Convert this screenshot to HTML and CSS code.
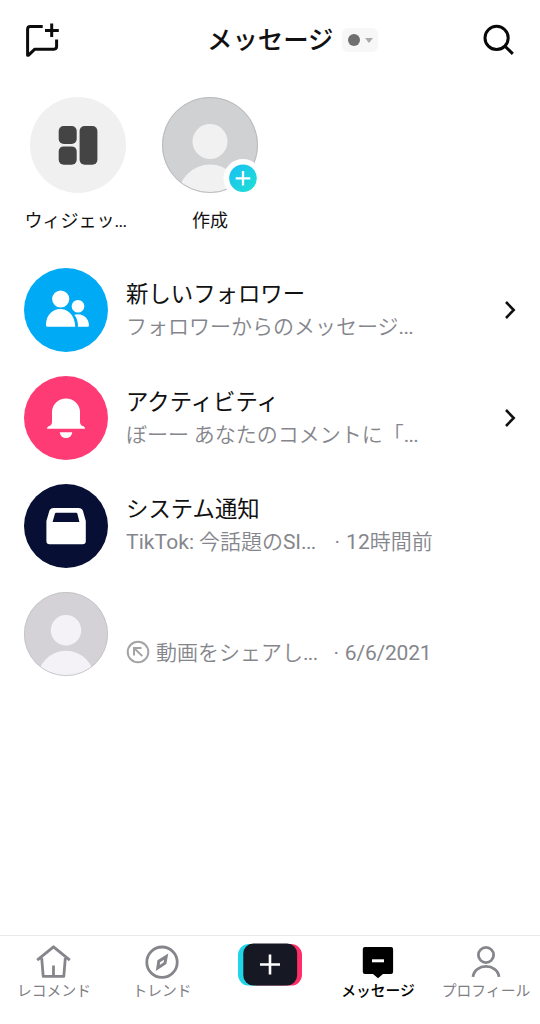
FILE: index.html
```html
<!DOCTYPE html>
<html lang="ja">
<head>
<meta charset="utf-8">
<title>メッセージ</title>
<link rel="stylesheet" href="styles.css">
</head>
<body>
<div class="app">
  <header class="header">
    <svg class="new-chat" width="36" height="36" viewBox="0 0 36 36"><path d="M19.7 4.4H7.3Q4.6 4.4 4.6 7.2V33.2H5.6L11.8 27.2H31Q33.6 27.2 33.6 24.6V17.6M22 8.4H35.8M28.7 1.6V15" fill="none" stroke="#0c0c0c" stroke-width="3" stroke-linejoin="round"/></svg>
    <div class="heading"><h1>メッセージ</h1><span class="status"><i class="dot"></i><i class="caret"></i></span></div>
    <svg class="search" width="32" height="32" viewBox="0 0 32 32"><circle cx="13.6" cy="13.9" r="11.6"/><path d="M22 22.2L29.8 29.9"/></svg>
  </header>
  <section class="stories">
    <div class="story widget">
      <svg width="96" height="96" viewBox="0 0 96 96"><circle cx="48" cy="48" r="48" fill="#f0f0f0"/><g fill="#444"><rect x="28.7" y="29" width="18" height="18" rx="5"/><rect x="28.7" y="49.4" width="18" height="18.4" rx="5"/><rect x="49.6" y="29" width="17.8" height="38.8" rx="5"/></g></svg>
      <span class="label">ウィジェッ<span class="dots">...</span></span>
    </div>
    <div class="story">
      <svg width="96" height="96" viewBox="0 0 96 96" overflow="visible"><defs><clipPath id="face"><circle cx="48" cy="48" r="48"/></clipPath><linearGradient id="aqua" x1="0" y1="0" x2="1" y2="1"><stop stop-color="#18bff5"/><stop offset="1" stop-color="#20e0d2"/></linearGradient></defs><g clip-path="url(#face)"><path d="M0 0H96V96H0Z" fill="#d0d1d3"/><circle cx="48" cy="44.5" r="17.5" fill="#f1f1f2"/><ellipse cx="48" cy="100" rx="32" ry="32.5" fill="#f1f1f2"/></g><circle cx="48" cy="48" r="47.5" fill="none" stroke="#b9bbbe"/><circle cx="81" cy="81.5" r="19.5" fill="#fff"/><circle cx="81" cy="81.3" r="13.8" fill="url(#aqua)"/><path d="M73.7 81.3H88.3M81 74V88.6" stroke="#fff" stroke-width="2.3"/></svg>
      <span class="label">作成</span>
    </div>
  </section>
  <main class="list">
    <div class="row">
      <svg class="avatar" viewBox="0 0 84 84"><circle cx="42" cy="42" r="42" fill="#00aaf5"/><g fill="#fff"><circle cx="36.7" cy="31" r="8.6"/><circle cx="54" cy="38.2" r="6.3"/><path d="M22 56.5C22.5 36 50.5 35 51.3 58.8H23.5Q22 58.8 22 57.2ZM50.2 46.8C58.5 44.3 65 50 65 57.4Q65 58.8 63.5 58.8H54C54 54 53 49.8 50.2 46.8Z"/></g></svg>
      <div class="text"><div class="name">新しいフォロワー</div><div class="preview">フォロワーからのメッセージ<span class="dots">...</span></div></div>
      <svg class="chevron" width="14" height="20" viewBox="0 0 14 20"><path d="M3 2L10.7 10L3 18"/></svg>
    </div>
    <div class="row">
      <svg class="avatar" viewBox="0 0 84 84"><circle cx="42" cy="42" r="42" fill="#ff3b75"/><path d="M28 36.5A14 14 0 0 1 56 36.5V46Q56 49.5 59.5 50.2Q61 50.7 61 52.8H23Q23 50.7 24.5 50.2Q28 49.5 28 46ZM35.8 56.2H48.2C47.5 64 36.5 64 35.8 56.2Z" fill="#fff"/></svg>
      <div class="text"><div class="name">アクティビティ</div><div class="preview">ぼーー あなたのコメントに「<span class="dots">...</span></div></div>
      <svg class="chevron" width="14" height="20" viewBox="0 0 14 20"><path d="M3 2L10.7 10L3 18"/></svg>
    </div>
    <div class="row system">
      <svg class="avatar" viewBox="0 0 84 84"><circle cx="42" cy="42" r="42" fill="#080f34"/><path fill-rule="evenodd" d="M29.5 24H54.5Q58 24 59 27L61.8 37V57Q61.8 60.2 58.6 60.2H25.6Q22.4 60.2 22.4 57V37L25.3 27Q26.3 24 29.5 24ZM32 28.7Q31.2 28.7 30.9 29.8L28.6 38H55.4L53.4 29.8Q53.1 28.7 52.2 28.7Z" fill="#fff"/></svg>
      <div class="text"><div class="name">システム通知</div><div class="preview"><span class="latin tiktok">TikTok:</span> 今話題の<span class="latin">SI</span><span class="dots">...</span><time><b>·</b><span class="latin">12</span>時間前</time></div></div>
    </div>
    <div class="row shared">
      <svg class="avatar" viewBox="0 0 84 84"><defs><clipPath id="face2"><circle cx="42" cy="42" r="42"/></clipPath></defs><g clip-path="url(#face2)"><path d="M0 0H84V84H0Z" fill="#d5d2d7"/><circle cx="42" cy="38.3" r="15.2" fill="#f5f2f7"/><ellipse cx="42" cy="87.5" rx="28.5" ry="28.8" fill="#f5f2f7"/></g><circle cx="42" cy="42" r="41.6" fill="none" stroke="#bfc1c3" stroke-width=".8"/></svg>
      <div class="text"><div class="preview"><svg class="share" width="24" height="24" viewBox="0 0 24 24"><circle cx="12" cy="12" r="10.3"/><path d="M8 15.5V8H15.5M8.3 8.3L16.3 16.1"/></svg>動画をシェアし<span class="dots">...</span><time class="date"><b>·</b><span class="latin">6/6/2021</span></time></div></div>
    </div>
  </main>
  <nav class="nav">
    <div class="tab"><svg width="36" height="36" viewBox="0 0 36 36"><path d="M1.2 16.2L17.5 2.8L33.8 16.2M5.7 14L7.2 32.3H27.8L29.3 14M17.5 21.5V32" stroke-linejoin="round"/></svg><span>レコメンド</span></div>
    <div class="tab"><svg width="36" height="36" viewBox="0 0 36 36"><circle cx="18" cy="18.2" r="15.2"/><path d="M22.2 12.6L14.8 17.1L13.8 24L21 19.2Z" stroke-width="3"/></svg><span>トレンド</span></div>
    <div class="tab create"><svg width="64" height="44" viewBox="0 0 64 44"><rect x="0" y="1" width="54" height="41.6" rx="11" fill="#20d5e8"/><rect x="10" y="1" width="54" height="41.6" rx="11" fill="#ff2e68"/><rect x="5.3" y=".5" width="53.8" height="42" rx="10" fill="#161823"/><path class="plus" d="M22 21.5H42M32 11.5V31.5"/></svg></div>
    <div class="tab active"><svg width="36" height="36" viewBox="0 0 36 36"><path d="M5 3H31Q33.1 3 33.1 5V27.7Q33.1 30 31 30H23L18 34.2L13 30H5Q2.8 30 2.8 27.7V5Q2.8 3 5 3Z" fill="#000" stroke="none"/><path d="M12 16.8H24" stroke="#fff" stroke-width="3"/></svg><span>メッセージ</span></div>
    <div class="tab"><svg width="36" height="36" viewBox="0 0 36 36"><circle cx="18" cy="11" r="7.6"/><path d="M5 32.8C6.5 19 29.5 19 31 32.8"/></svg><span>プロフィール</span></div>
  </nav>
</div>
</body>
</html>
```
FILE: styles.css
```css
* { box-sizing: border-box; }
body { margin: 0; background: #fff; font-family: "Noto Sans CJK JP", sans-serif; color: #111; }
svg { display: block; flex: none; }
.app { width: 540px; height: 1024px; display: flex; flex-direction: column; overflow: hidden; }
.header { height: 80px; padding: 0 25px 0 24px; display: flex; align-items: center; }
.heading { display: flex; align-items: center; gap: 9px; margin-left: 148px; }
h1 { margin: -4px 0 0; font-size: 25.4px; line-height: 36px; font-weight: 500; white-space: nowrap; }
.status { width: 36px; height: 24px; border-radius: 6px; background: #f7f7f7; display: flex; align-items: center; gap: 5px; padding-left: 6px; }
.dot { width: 12px; height: 12px; border-radius: 50%; background: #707070; }
.caret { border: 4px solid transparent; border-top: 5px solid #aaa; border-bottom: 0; }
.search { margin-left: auto; fill: none; stroke: #080808; stroke-width: 3; }
.new-chat { margin-left: -1px; }
.stories { height: 176px; padding: 17px 0 0 12px; display: flex; }
.story { width: 132px; display: flex; flex-direction: column; align-items: center; gap: 13px; }
.label { font-size: 18px; line-height: 27px; white-space: nowrap; }
.widget .label { margin-right: 5px; }
.dots { font-family: Roboto, sans-serif; font-weight: 400; letter-spacing: -0.7px; }
.row { height: 108px; padding: 0 23px 0 24px; display: flex; align-items: center; }
.avatar { width: 84px; height: 84px; }
.text { flex: 1; padding-left: 18px; white-space: nowrap; }
.name { font-size: 22.4px; line-height: 33px; }
.preview { font-size: 21px; line-height: 33px; font-weight: 350; color: #85868c; display: flex; align-items: baseline; white-space: pre; }
.latin { font-family: Roboto, sans-serif; font-weight: 400; }
.tiktok { letter-spacing: 0.1px; }
time { margin-left: 19px; }
time b { font-family: Roboto, sans-serif; font-weight: 400; margin-right: 6px; }
.date { margin-left: 16px; letter-spacing: -0.2px; }
.chevron { fill: none; stroke: #111; stroke-width: 2.6; }
.system .text { padding-bottom: 3px; }
.shared .text { padding-top: 36px; }
.share { fill: none; stroke: #a4a4a6; stroke-width: 2; align-self: center; margin-right: 6px; }
.nav { margin-top: auto; height: 89px; border-top: 1px solid #e8e8e8; display: flex; }
.tab { width: 108px; padding-top: 8px; display: flex; flex-direction: column; align-items: center; font-size: 14.8px; line-height: 20px; color: #7f8086; white-space: nowrap; }
.tab svg { fill: none; stroke: #85868b; stroke-width: 2.8; }
.tab.create svg { margin-top: -1px; stroke: none; }
.tab .plus { stroke: #fff; stroke-width: 2.6; }
.tab.active { color: #000; font-weight: 500; }
```
